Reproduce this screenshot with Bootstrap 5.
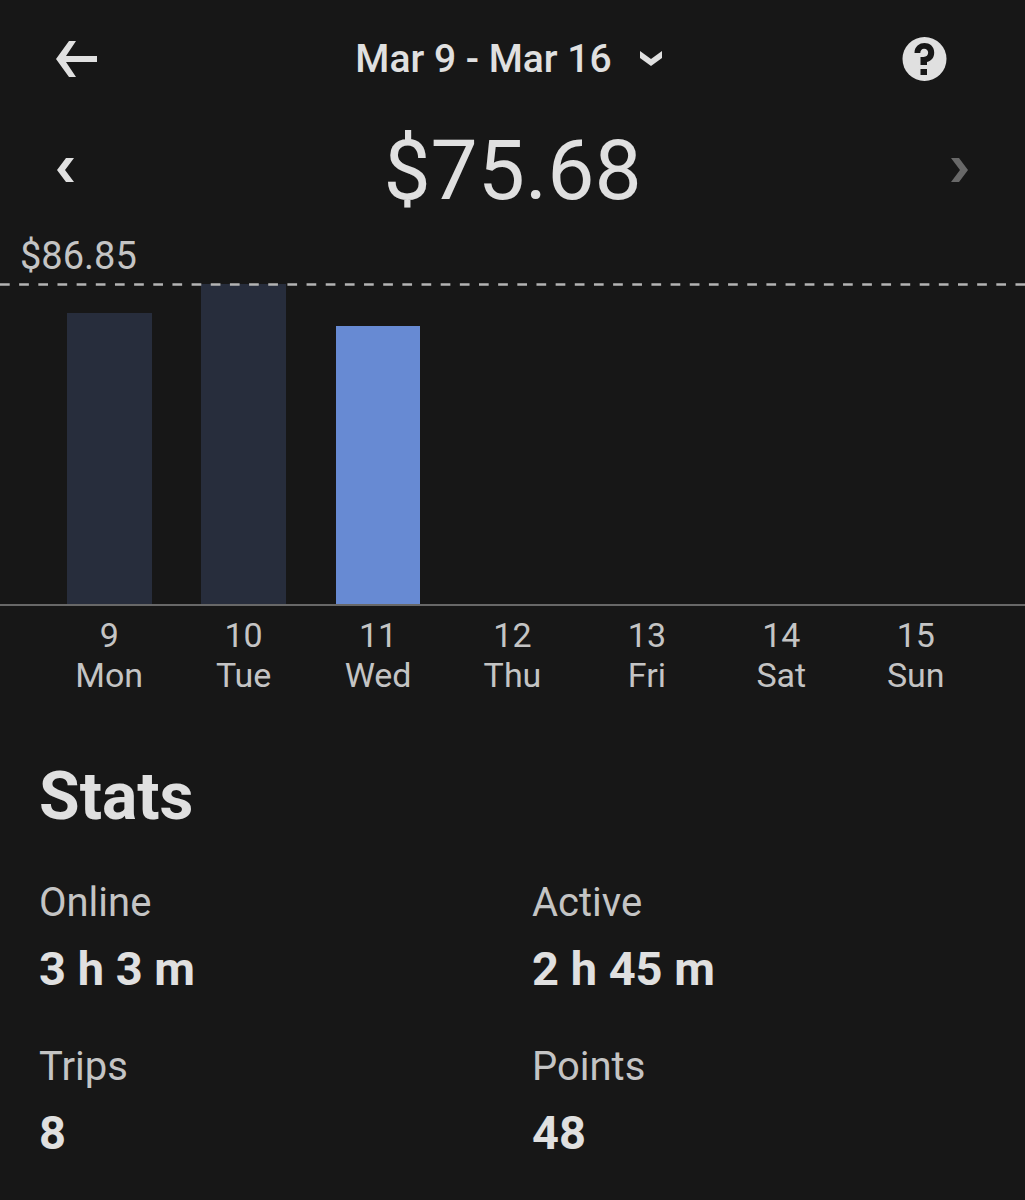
<!DOCTYPE html>
<html lang="en" data-bs-theme="dark">
<head>
<meta charset="utf-8">
<meta name="viewport" content="width=device-width, initial-scale=1">
<title>Weekly earnings</title>
<link href="https://cdn.jsdelivr.net/npm/bootstrap@5.3.0/dist/css/bootstrap.min.css" rel="stylesheet">
<script src="https://cdn.jsdelivr.net/npm/bootstrap@5.3.0/dist/js/bootstrap.bundle.min.js" defer></script>
<style>
  body { background: #171717; color: #e0e0e0; font-family: Roboto, "Liberation Sans", sans-serif; }
  svg { display: block; fill: currentColor; }
  .icon-btn { color: inherit; background: none; border: 0; padding: 0; }
  .top-bar { height: 118px; display: grid; grid-template-columns: 1fr auto 1fr; }
  .slot { flex: 1 1 0; }
  .back-side { padding-left: 56px; }
  .help-side { padding-right: 78px; }
  .range-btn { font-size: 39px; line-height: 48px; font-weight: 500; gap: 28px; }
  .total-bar { height: 106px; padding: 0 57px; }
  .total { font-size: 84px; line-height: 100px; font-weight: 400; color: inherit; }
  .next-btn:disabled { color: #686868; }
  .peak { font-size: 38px; line-height: 44px; font-weight: 400; color: #c4c4c4; padding: 10px 20px 6px; }
  .plot { height: 322px; padding: 0 42px; border-bottom: 2px solid #686868; }
  .peak-line { top: -1px; left: 0; width: 100%; height: 3px; stroke: #b4b4b4; }
  .bar { width: 63%; background: #272d3c; }
  .bar.active { background: #678ad3; }
  .days { padding: 9px 42px 0; font-size: 34px; line-height: 40px; font-weight: 400; color: #c4c4c4; }
  .stats { padding: 66px 39px 40px; }
  .stats h2 { font-size: 66px; line-height: 72px; font-weight: 700; color: inherit; margin: 0 0 46px; }
  .stat-grid { display: grid; grid-template-columns: 1fr 1fr; gap: 46px 39px; }
  .stat-grid dt { font-size: 40px; line-height: 48px; font-weight: 400; color: #c4c4c4; margin-bottom: 14px; }
  .stat-grid dd { font-size: 47px; line-height: 56px; font-weight: 700; }
</style>
</head>
<body>
<header class="top-bar align-items-center">
  <div class="back-side d-flex">
    <button class="icon-btn" type="button" aria-label="Back">
      <svg width="41" height="36" viewBox="0 0 41 36"><path d="M13 0H20L10 15H41V21H10L20 36H13L0 18Z"/></svg>
    </button>
  </div>
  <button class="icon-btn range-btn d-flex align-items-center" type="button">
    <span>Mar 9 - Mar 16</span>
    <svg width="30" height="16" viewBox="0 0 30 16"><path d="M0 0L11 8L22 0V7L11 15L0 7Z"/></svg>
  </button>
  <div class="help-side d-flex justify-content-end">
    <button class="icon-btn" type="button" aria-label="Help">
      <svg width="45" height="45" viewBox="0 0 45 45"><circle cx="22.500" cy="22" r="22"/><path d="M12.500 16C12.500 2.800 32.200 2.800 32.200 15.500C32.200 20.500 29.500 24 25 25V28H18.500V20H21.500C27.800 20 27.500 11.800 22 11.800C19.800 11.800 18.300 13.400 18.300 16Z" fill="#171717"/><path d="M18.500 32H25V38H18.500Z" fill="#171717"/></svg>
    </button>
  </div>
</header>
<main>
  <div class="total-bar d-flex align-items-center justify-content-between">
    <button class="icon-btn" type="button" aria-label="Previous week">
      <svg width="17" height="26" viewBox="0 0 17 26"><path d="M9 0H17L8 12L17 24H9L0 12Z"/></svg>
    </button>
    <h1 class="total m-0">$75.68</h1>
    <button class="icon-btn next-btn" type="button" aria-label="Next week" disabled>
      <svg width="17" height="26" viewBox="0 0 17 26"><path d="M8 0H0L9 12L0 24H8L17 12Z"/></svg>
    </button>
  </div>
  <section aria-label="Earnings by day">
    <div class="peak">$86.85</div>
    <div class="plot position-relative d-flex align-items-end">
      <div class="slot d-flex justify-content-center align-items-end h-100"><div class="bar" style="height:91%"></div></div>
      <div class="slot d-flex justify-content-center align-items-end h-100"><div class="bar" style="height:100%"></div></div>
      <div class="slot d-flex justify-content-center align-items-end h-100"><div class="bar active" style="height:87%"></div></div>
      <div class="slot"></div><div class="slot"></div><div class="slot"></div><div class="slot"></div>
      <svg class="peak-line position-absolute" aria-hidden="true"><line x1="0" y1="1.500" x2="100%" y2="1.500" stroke-width="2.500" stroke-dasharray="9.700 9.460"/></svg>
    </div>
    <div class="days d-flex text-center">
      <div class="slot">9<br>Mon</div>
      <div class="slot">10<br>Tue</div>
      <div class="slot">11<br>Wed</div>
      <div class="slot">12<br>Thu</div>
      <div class="slot">13<br>Fri</div>
      <div class="slot">14<br>Sat</div>
      <div class="slot">15<br>Sun</div>
    </div>
  </section>
  <section class="stats">
    <h2>Stats</h2>
    <dl class="stat-grid m-0">
      <div><dt>Online</dt><dd class="m-0">3 h 3 m</dd></div>
      <div><dt>Active</dt><dd class="m-0">2 h 45 m</dd></div>
      <div><dt>Trips</dt><dd class="m-0">8</dd></div>
      <div><dt>Points</dt><dd class="m-0">48</dd></div>
    </dl>
  </section>
</main>
</body>
</html>
